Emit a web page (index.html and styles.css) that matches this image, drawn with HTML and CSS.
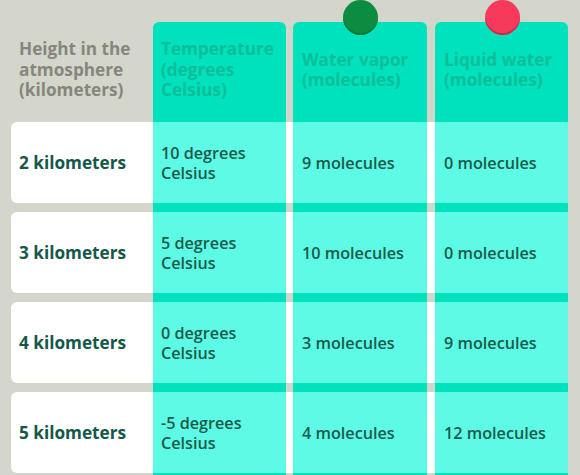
FILE: index.html
```html
<!DOCTYPE html>
<html>
<head>
<meta charset="utf-8">
<link rel="stylesheet" href="styles.css">
</head>
<body>
<div class="table">
  <div class="strip c2"></div>
  <div class="strip c4"></div>
  <div class="strip c6"></div>

  <div class="card r3"></div>
  <div class="card r5"></div>
  <div class="card r7"></div>
  <div class="card r9"></div>

  <div class="head c1">Height in the atmosphere (kilometers)</div>
  <div class="head teal c2">Temperature (degrees Celsius)</div>
  <div class="head teal c4"><span class="dot green"></span>Water vapor (molecules)</div>
  <div class="head teal c6"><span class="dot red"></span>Liquid water (molecules)</div>

  <div class="cell km c1 r3">2 kilometers</div>
  <div class="cell lt c2 r3">10 degrees<br>Celsius</div>
  <div class="cell lt c4 r3">9 molecules</div>
  <div class="cell lt c6 r3">0 molecules</div>

  <div class="cell km c1 r5">3 kilometers</div>
  <div class="cell lt c2 r5">5 degrees<br>Celsius</div>
  <div class="cell lt c4 r5">10 molecules</div>
  <div class="cell lt c6 r5">0 molecules</div>

  <div class="cell km c1 r7">4 kilometers</div>
  <div class="cell lt c2 r7">0 degrees<br>Celsius</div>
  <div class="cell lt c4 r7">3 molecules</div>
  <div class="cell lt c6 r7">9 molecules</div>

  <div class="cell km c1 r9">5 kilometers</div>
  <div class="cell lt c2 r9">-5 degrees<br>Celsius</div>
  <div class="cell lt c4 r9">4 molecules</div>
  <div class="cell lt c6 r9">12 molecules</div>
</div>
</body>
</html>
```

FILE: styles.css
```css
html, body {
  margin: 0;
  padding: 0;
  background: #d4d6cc;
}
body {
  width: 580px;
  height: 475px;
  overflow: hidden;
  font-family: "Open Sans", "Liberation Sans", sans-serif;
}
.table {
  display: grid;
  margin-left: 11px;
  grid-template-columns: 142px 133px 7px 134px 8px 133px;
  grid-template-rows: 22px 100px 81px 9px 81px 9px 81px 9px 81px 10px;
}
.c1 { grid-column: 1; }
.c2 { grid-column: 2; }
.c4 { grid-column: 4; }
.c6 { grid-column: 6; }
.r3 { grid-row: 3; }
.r5 { grid-row: 5; }
.r7 { grid-row: 7; }
.r9 { grid-row: 9; }

.strip {
  grid-row: 2 / -1;
  background: #00e1bd;
  border-radius: 6px 6px 0 0;
}
.card {
  grid-column: 1 / -1;
  background: #ffffff;
  border-radius: 6px;
}
.head {
  grid-row: 2;
  position: relative;
  display: flex;
  align-items: center;
  padding: 0 6px 4px 8px;
  font-size: 17.2px;
  font-weight: 700;
  line-height: 20.5px;
  color: #86867e;
}
.head.teal {
  color: #0cbf99;
  padding-left: 9px;
}
.head.c2 { padding-left: 8px; }
.dot {
  position: absolute;
  top: -22px;
  left: 50%;
  width: 35px;
  height: 35px;
  margin-left: -17px;
  border-radius: 50%;
}
.dot.green {
  background: #0b8c40;
  box-shadow: inset 0 -2px 0 #087834;
}
.dot.red {
  background: #f7395c;
  box-shadow: inset 0 -2px 0 #cf2b48;
}
.cell {
  display: flex;
  align-items: center;
  padding: 0 9px;
  font-size: 16.2px;
  line-height: 20px;
  font-weight: 600;
  color: #1b5a4a;
}
.cell.km {
  padding-left: 8px;
  font-weight: 700;
  font-size: 17.2px;
  color: #15574a;
}
.cell.c2 { padding-left: 8px; }
.lt {
  background: #5dfbe5;
}
```
